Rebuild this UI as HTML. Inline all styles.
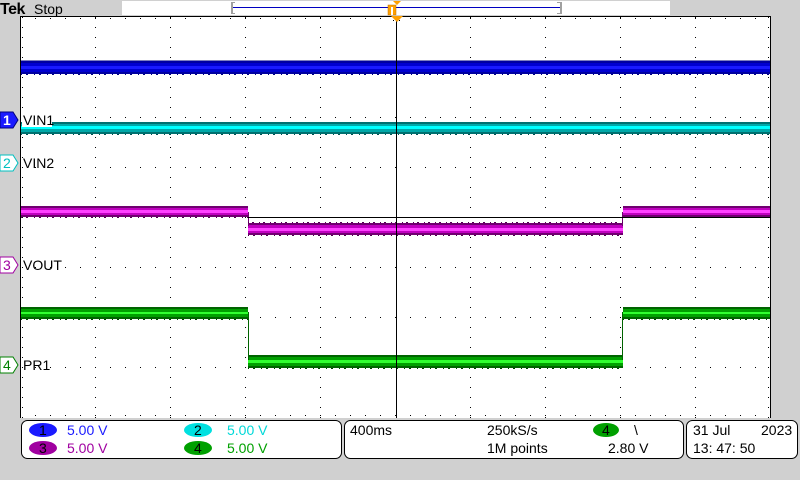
<!DOCTYPE html>
<html><head><meta charset="utf-8"><style>
html,body{margin:0;padding:0;background:#d0d0d0;width:800px;height:480px;overflow:hidden;font-family:"Liberation Sans",sans-serif}
svg{position:absolute;left:0;top:0}
</style></head><body>
<svg width="800" height="480" xmlns="http://www.w3.org/2000/svg" font-family="Liberation Sans, sans-serif">
<rect x="0" y="0" width="800" height="480" fill="#d0d0d0"/>
<!-- top bar -->
<text x="0" y="14" font-size="16" font-weight="bold" fill="#000" letter-spacing="-0.5">Tek</text>
<text x="34" y="14" font-size="14" fill="#000">Stop</text>
<rect x="122" y="1" width="548" height="14" fill="#fff"/>
<rect x="231" y="2" width="2" height="12" fill="#a0a0a0"/>
<rect x="231" y="2" width="4" height="1" fill="#a0a0a0"/><rect x="231" y="13" width="4" height="1" fill="#a0a0a0"/>
<rect x="233" y="7" width="327" height="1" fill="#0000c0"/>
<rect x="560" y="2" width="2" height="12" fill="#a0a0a0"/>
<rect x="557" y="2" width="4" height="1" fill="#a0a0a0"/><rect x="557" y="13" width="4" height="1" fill="#a0a0a0"/>
<rect x="388" y="5" width="8" height="10" fill="#ffa000" stroke="#c07000" stroke-width="0.5"/>
<rect x="391" y="7" width="2" height="8" fill="#fff"/>
<polygon points="393,1 401,1 397,5" fill="#ffa000"/>
<!-- plot area -->
<rect x="20" y="16" width="751" height="402" fill="#fff"/>
<rect x="20" y="16" width="1" height="402" fill="#000"/>
<rect x="770" y="16" width="1" height="402" fill="#000"/>
<rect x="20" y="16" width="751" height="1" fill="#000"/>
<!-- grid dotted -->
<g stroke="#000" stroke-width="1">
<g stroke-dasharray="1 9">
<line x1="95.5" y1="17" x2="95.5" y2="418"/>
<line x1="170.5" y1="17" x2="170.5" y2="418"/>
<line x1="245.5" y1="17" x2="245.5" y2="418"/>
<line x1="320.5" y1="17" x2="320.5" y2="418"/>
<line x1="470.5" y1="17" x2="470.5" y2="418"/>
<line x1="545.5" y1="17" x2="545.5" y2="418"/>
<line x1="620.5" y1="17" x2="620.5" y2="418"/>
<line x1="695.5" y1="17" x2="695.5" y2="418"/>
<line x1="22.5" y1="17" x2="22.5" y2="418"/>
<line x1="768.5" y1="17" x2="768.5" y2="418"/>
</g>
<g stroke-dasharray="1 14">
<line x1="35" y1="67.5" x2="770" y2="67.5"/>
<line x1="35" y1="117.5" x2="770" y2="117.5"/>
<line x1="35" y1="167.5" x2="770" y2="167.5"/>
<line x1="35" y1="267.5" x2="770" y2="267.5"/>
<line x1="35" y1="317.5" x2="770" y2="317.5"/>
<line x1="35" y1="367.5" x2="770" y2="367.5"/>
<line x1="35" y1="415.5" x2="770" y2="415.5"/>
<line x1="35" y1="18.5" x2="770" y2="18.5"/>
</g>
<g stroke-dasharray="1 2">
<line x1="393" y1="20.5" x2="400" y2="20.5"/>
</g>
</g>
<!-- traces -->
<g>
<rect x="21" y="60" width="749" height="1" fill="#000080" opacity="0.5"/>
<rect x="21" y="61" width="749" height="13" fill="#0000a0"/>
<rect x="21" y="63" width="749" height="9" fill="#0000d0"/>
<rect x="21" y="66" width="749" height="3" fill="#1a1aff"/>
<line x1="21" y1="74.5" x2="770" y2="74.5" stroke="#000080" stroke-dasharray="1 4 2 6"/>
<rect x="21" y="122" width="749" height="12" fill="#007070"/>
<rect x="21" y="124" width="749" height="8" fill="#00a8a8"/>
<rect x="21" y="126" width="749" height="3" fill="#00ffff"/>
<line x1="21" y1="134.5" x2="770" y2="134.5" stroke="#005050" stroke-dasharray="1 4 2 6"/>
<g fill="#700070">
<rect x="21" y="206" width="227" height="11"/><rect x="248" y="223" width="375" height="12"/><rect x="623" y="206" width="147" height="11"/>
</g>
<g fill="#c000c0">
<rect x="21" y="208" width="227" height="7"/><rect x="248" y="225" width="375" height="8"/><rect x="623" y="208" width="147" height="7"/>
</g>
<g fill="#ff40ff">
<rect x="21" y="210" width="227" height="3"/><rect x="248" y="228" width="375" height="3"/><rect x="623" y="210" width="147" height="3"/>
</g>
<rect x="248" y="212" width="1" height="14" fill="#700070"/><rect x="622" y="212" width="1" height="14" fill="#700070"/>
<line x1="21" y1="217.5" x2="248" y2="217.5" stroke="#500050" stroke-dasharray="1 4 2 6"/>
<line x1="248" y1="235.5" x2="623" y2="235.5" stroke="#500050" stroke-dasharray="1 4 2 6"/>
<line x1="248" y1="222.5" x2="623" y2="222.5" stroke="#500050" stroke-dasharray="1 3 2 5"/>
<g fill="#006400">
<rect x="21" y="307" width="227" height="12"/><rect x="248" y="355" width="375" height="13"/><rect x="623" y="307" width="147" height="12"/>
</g>
<g fill="#00a000">
<rect x="21" y="309" width="227" height="8"/><rect x="248" y="357" width="375" height="9"/><rect x="623" y="309" width="147" height="8"/>
</g>
<g fill="#30ff30">
<rect x="21" y="312" width="227" height="2"/><rect x="248" y="360" width="375" height="3"/><rect x="623" y="312" width="147" height="2"/>
</g>
<rect x="248" y="312" width="1" height="48" fill="#006400"/><rect x="622" y="312" width="1" height="48" fill="#006400"/>
<line x1="21" y1="319.5" x2="248" y2="319.5" stroke="#004000" stroke-dasharray="1 4 2 6"/>
<line x1="248" y1="368.5" x2="623" y2="368.5" stroke="#004000" stroke-dasharray="1 4 2 6"/>
<line x1="623" y1="319.5" x2="770" y2="319.5" stroke="#004000" stroke-dasharray="1 4 2 6"/>
</g>
<!-- crosshair -->
<rect x="396" y="17" width="1" height="401" fill="#000"/>
<rect x="248" y="217" width="523" height="1" fill="#000"/>
<polygon points="391,16 403,16 397,22" fill="#ffa000"/>
<!-- channel labels -->
<rect x="22" y="113" width="30" height="14" fill="#fff"/>
<text x="23" y="125" font-size="14" fill="#000">VIN1</text>
<text x="23" y="168" font-size="14" fill="#000">VIN2</text>
<text x="23" y="270" font-size="14" fill="#000">VOUT</text>
<text x="23" y="370" font-size="14" fill="#000">PR1</text>
<g font-size="14" font-weight="bold">
<polygon points="0,112 13,112 18,120 13,128 0,128" fill="#1a1aff" stroke="#000080"/>
<text x="3" y="125" fill="#fff">1</text>
<polygon points="0,155 13,155 18,163 13,171 0,171" fill="#fff" stroke="#00c0c0"/>
<text x="3" y="168" fill="#00c0c0" font-weight="normal">2</text>
<polygon points="0,257 13,257 18,265 13,273 0,273" fill="#fff" stroke="#a000a0"/>
<text x="3" y="270" fill="#a000a0" font-weight="normal">3</text>
<polygon points="0,357 13,357 18,365 13,373 0,373" fill="#fff" stroke="#008000"/>
<text x="3" y="370" fill="#008000" font-weight="normal">4</text>
</g>
<!-- bottom panels -->
<rect x="21.5" y="420.5" width="320" height="38" rx="6" fill="#fff" stroke="#000"/>
<rect x="344.5" y="420.5" width="339" height="38" rx="6" fill="#fff" stroke="#000"/>
<rect x="686.5" y="420.5" width="111" height="38" rx="6" fill="#fff" stroke="#000"/>
<g font-size="14">
<ellipse cx="43" cy="430" rx="14" ry="7" fill="#1a1aff"/><text x="39" y="435" fill="#000">1</text>
<ellipse cx="43" cy="448" rx="14" ry="7" fill="#a000a0"/><text x="39" y="453" fill="#000">3</text>
<ellipse cx="198" cy="430" rx="14" ry="7" fill="#00e0e0"/><text x="194" y="435" fill="#000">2</text>
<ellipse cx="198" cy="448" rx="14" ry="7" fill="#00a000"/><text x="194" y="453" fill="#000">4</text>
<text x="67" y="435" fill="#1a1aff">5.00 V</text>
<text x="67" y="453" fill="#a000a0">5.00 V</text>
<text x="227" y="435" fill="#00d8d8">5.00 V</text>
<text x="227" y="453" fill="#00a000">5.00 V</text>
<text x="350" y="435" fill="#000">400ms</text>
<text x="487" y="435" fill="#000">250kS/s</text>
<text x="487" y="453" fill="#000">1M points</text>
<ellipse cx="606" cy="430" rx="13" ry="7" fill="#00a000"/><text x="602" y="435" fill="#000">4</text>
<text x="634" y="435" fill="#000">\</text>
<text x="608" y="453" fill="#000">2.80 V</text>
<text x="693" y="435" fill="#000">31 Jul</text>
<text x="761" y="435" fill="#000">2023</text>
<text x="693" y="453" fill="#000">13: 47: 50</text>
</g>
</svg>
</body></html>
